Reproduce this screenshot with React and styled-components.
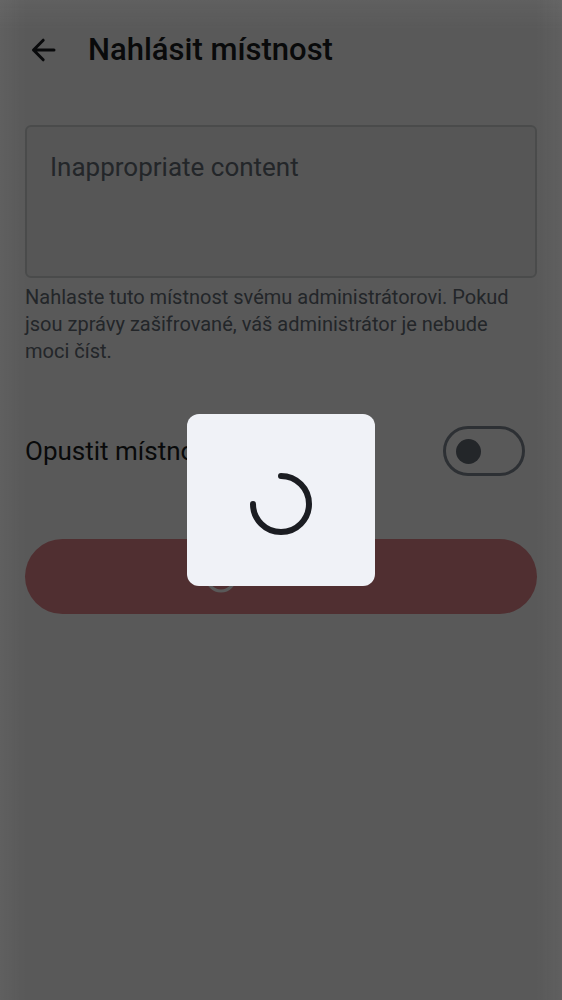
import React from "react";
import styled, { createGlobalStyle } from "styled-components";

const GlobalStyle = createGlobalStyle`
  *, *::before, *::after { box-sizing: border-box; }
  body {
    margin: 0;
    background: #ffffff;
    color: #1b1d22;
    font-family: Roboto, "Noto Sans", sans-serif;
  }
`;

const Page = styled.div`
  min-height: 100vh;
  display: flex;
  flex-direction: column;
`;

const Header = styled.header`
  display: flex;
  align-items: center;
  gap: 26px;
  height: 100px;
  padding: 0 24px;
`;

const BackButton = styled.button`
  display: flex;
  padding: 0;
  border: 0;
  background: none;
  color: inherit;
`;

const Title = styled.h1`
  margin: 0;
  font-size: 31px;
  line-height: 40px;
  font-weight: 500;
`;

const Form = styled.form`
  display: flex;
  flex-direction: column;
  padding: 25px;
`;

const Reason = styled.textarea`
  display: block;
  width: 100%;
  height: 153px;
  padding: 21px 23px;
  border: 2px solid #d3d7d7;
  border-radius: 6px;
  background: #f5f6f6;
  color: #1b1d22;
  font: 26px/38px Roboto, "Noto Sans", sans-serif;
  resize: none;
  outline: 0;

  &::placeholder {
    color: #656d77;
    opacity: 1;
  }
`;

const HelperText = styled.p`
  margin: 6px 0 0;
  padding-right: 12px;
  color: #656d77;
  font-size: 20px;
  line-height: 27px;
`;

const SwitchRow = styled.div`
  display: flex;
  align-items: center;
  justify-content: space-between;
  margin: 61px 0 63px;
  padding-right: 12px;
`;

const SwitchLabel = styled.label`
  font-size: 26px;
  line-height: 38px;
`;

const Switch = styled.input`
  appearance: none;
  display: flex;
  align-items: center;
  width: 82px;
  height: 50px;
  margin: 0;
  padding: 0 10px;
  border: 3px solid #818a95;
  border-radius: 25px;

  &::before {
    content: "";
    width: 25px;
    height: 25px;
    border-radius: 50%;
    background: #656d77;
  }

  &:checked {
    justify-content: flex-end;
  }
`;

const ReportButton = styled.button`
  display: flex;
  align-items: center;
  justify-content: center;
  gap: 28px;
  height: 75px;
  border: 0;
  border-radius: 38px;
  background: #e4878c;
  color: #ffffff;
  font: 500 25px/38px Roboto, "Noto Sans", sans-serif;
`;

const Backdrop = styled.div`
  position: fixed;
  inset: 0;
  display: flex;
  align-items: center;
  justify-content: center;
  background:
    linear-gradient(to bottom, rgba(255, 255, 255, 0.04), transparent 30px),
    linear-gradient(to right, rgba(255, 255, 255, 0.04), transparent 26px),
    linear-gradient(to left, rgba(255, 255, 255, 0.04), transparent 26px),
    rgba(0, 0, 0, 0.65);
`;

const Dialog = styled.div`
  display: flex;
  padding: 59px 63px 51px;
  border-radius: 12px;
  background: #f0f2f7;
  color: #1b1d22;
`;

export default function App() {
  return (
    <>
      <GlobalStyle />
      <Page>
        <Header>
          <BackButton type="button" aria-label="Zpět">
            <svg width="38" height="38" viewBox="0 0 38 38" fill="none" stroke="currentColor" strokeWidth="3" strokeLinecap="round" strokeLinejoin="round">
              <path d="M30 19H9.5M19.2 9.2L9.5 19l9.7 9.8" />
            </svg>
          </BackButton>
          <Title>Nahlásit místnost</Title>
        </Header>
        <Form>
          <Reason
            placeholder="Inappropriate content"
            aria-label="Inappropriate content"
            aria-describedby="reason-help"
          />
          <HelperText id="reason-help">
            Nahlaste tuto místnost svému administrátorovi. Pokud jsou zprávy
            zašifrované, váš administrátor je nebude moci číst.
          </HelperText>
          <SwitchRow>
            <SwitchLabel htmlFor="leave">Opustit místnost</SwitchLabel>
            <Switch id="leave" type="checkbox" role="switch" />
          </SwitchRow>
          <ReportButton type="button">
            <svg width="32" height="32" viewBox="0 0 32 32" fill="none" stroke="currentColor" strokeWidth="3">
              <circle cx="16" cy="16" r="14" />
              <path d="M16 8v10M16 21v3" />
            </svg>
            Nahlásit
          </ReportButton>
        </Form>
      </Page>
      <Backdrop>
        <Dialog role="dialog" aria-modal="true" aria-busy="true">
          <svg width="62" height="62" viewBox="0 0 62 62" fill="none" stroke="currentColor" strokeWidth="6" strokeLinecap="round">
            <path d="M31 3A28 28 0 1 1 3 31" />
          </svg>
        </Dialog>
      </Backdrop>
    </>
  );
}
